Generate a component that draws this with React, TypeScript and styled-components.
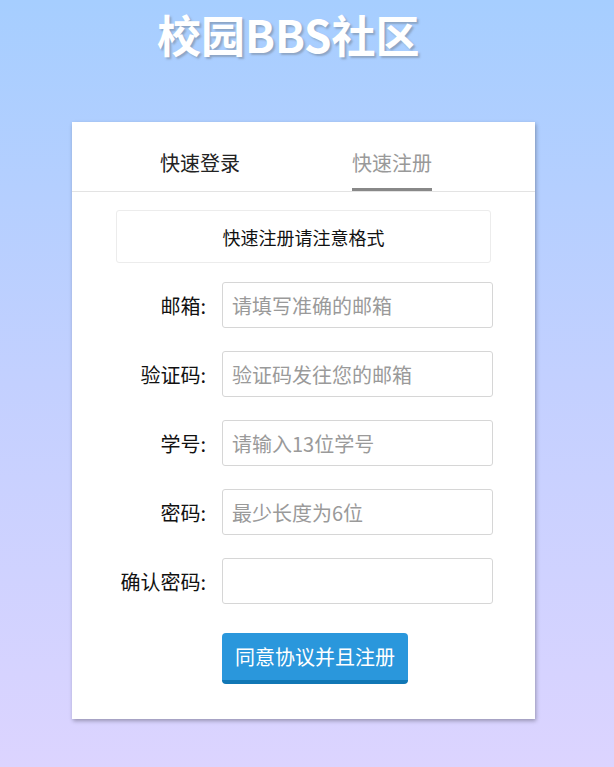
import React from 'react';
import styled, { createGlobalStyle } from 'styled-components';

const GlobalStyle = createGlobalStyle`
  html, body {
    margin: 0;
    padding: 0;
  }
  body {
    min-height: 767px;
    background: linear-gradient(180deg, #a6ceff 0%, #c3d0ff 50%, #dcd4ff 100%);
    font-family: "Noto Sans CJK SC", "Noto Sans", sans-serif;
  }
`;

const Page = styled.div`
  width: 463px;
  margin-left: 72px;
  padding-bottom: 49px;
`;

const Title = styled.h1`
  margin: 4px 0 0 85px;
  font-size: 44px;
  line-height: 60px;
  font-weight: 700;
  color: #fff;
  text-shadow: 2px 2px 2px rgba(90, 90, 90, 0.35);
`;

const Card = styled.div`
  margin-top: 58px;
  background: #fff;
  box-shadow: 1px 2px 4px rgba(0, 0, 0, 0.3);
  padding-bottom: 35px;
`;

const Tabs = styled.div`
  display: grid;
  grid-template-columns: 192px 192px;
  padding-left: 32px;
  border-bottom: 1px solid #e3e3e3;
`;

const TabCell = styled.div`
  display: flex;
  justify-content: center;
`;

const Tab = styled.span<{ $active?: boolean }>`
  padding: 26px 0 10px;
  font-size: 20px;
  line-height: 30px;
  color: ${p => (p.$active ? '#999' : '#222')};
  border-bottom: 3px solid ${p => (p.$active ? '#888' : 'transparent')};
  cursor: pointer;
`;

const Notice = styled.div`
  margin: 18px 44px 0;
  height: 51px;
  border: 1px solid #ececec;
  border-radius: 3px;
  display: flex;
  align-items: center;
  justify-content: center;
  font-size: 18px;
  color: #111;
`;

const Form = styled.form`
  margin-top: 19px;
  padding-left: 44px;
  display: flex;
  flex-direction: column;
  gap: 23px;
`;

const Row = styled.div`
  display: grid;
  grid-template-columns: 90px 271px;
  column-gap: 16px;
  align-items: center;
`;

const Label = styled.label`
  text-align: right;
  font-size: 20px;
  color: #111;
`;

const Input = styled.input`
  box-sizing: border-box;
  width: 271px;
  height: 46px;
  padding: 0 9px;
  border: 1px solid #d6d6d6;
  border-radius: 3px;
  font-family: inherit;
  font-size: 20px;
  color: #333;
  outline: none;
  &::placeholder {
    color: #9a9a9a;
  }
`;

const Submit = styled.button`
  margin: 6px 0 0 106px;
  align-self: flex-start;
  height: 51px;
  padding: 0 13px;
  border: none;
  border-bottom: 4px solid #1177b5;
  border-radius: 4px;
  background: #2a97dc;
  color: #fff;
  font-family: inherit;
  font-size: 20px;
  cursor: pointer;
`;

const fields = [
  { label: '邮箱:', placeholder: '请填写准确的邮箱', type: 'text' },
  { label: '验证码:', placeholder: '验证码发往您的邮箱', type: 'text' },
  { label: '学号:', placeholder: '请输入13位学号', type: 'text' },
  { label: '密码:', placeholder: '最少长度为6位', type: 'password' },
  { label: '确认密码:', placeholder: '', type: 'password' },
];

export default function App() {
  return (
    <>
      <GlobalStyle />
      <Page>
        <Title>校园BBS社区</Title>
        <Card>
          <Tabs>
            <TabCell>
              <Tab>快速登录</Tab>
            </TabCell>
            <TabCell>
              <Tab $active>快速注册</Tab>
            </TabCell>
          </Tabs>
          <Notice>快速注册请注意格式</Notice>
          <Form onSubmit={e => e.preventDefault()}>
            {fields.map(f => (
              <Row key={f.label}>
                <Label>{f.label}</Label>
                <Input type={f.type} placeholder={f.placeholder} />
              </Row>
            ))}
            <Submit type="submit">同意协议并且注册</Submit>
          </Form>
        </Card>
      </Page>
    </>
  );
}
